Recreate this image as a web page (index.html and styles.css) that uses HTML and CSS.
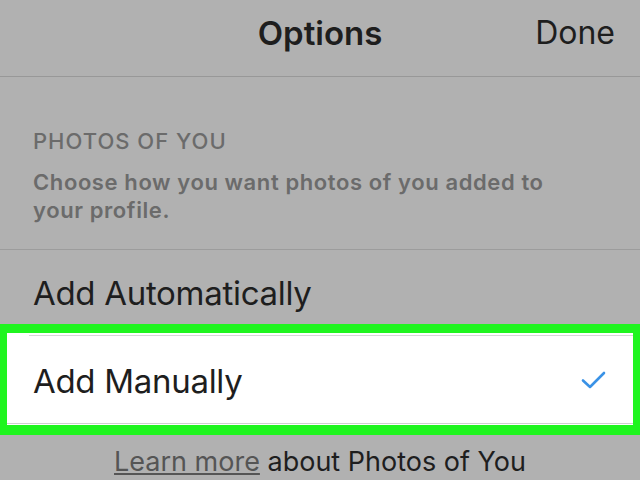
FILE: index.html
```html
<!DOCTYPE html>
<html lang="en">
<head>
  <meta charset="UTF-8">
  <meta name="viewport" content="width=device-width, initial-scale=1.0">
  <title>Options</title>
  <link rel="stylesheet" href="styles.css">
</head>
<body>
  <header class="topbar">
    <h1 class="title">Options</h1>
    <span class="done">Done</span>
  </header>

  <section class="intro">
    <h2 class="section-title">PHOTOS OF YOU</h2>
    <p class="section-desc">Choose how you want photos of you added to your profile.</p>
  </section>

  <div class="row">Add Automatically</div>

  <div class="highlight">
    <div class="row row-selected">
      <span>Add Manually</span>
      <svg class="check" width="26" height="20" viewBox="0 0 26 20">
        <path d="M2 10.5 L9 17 L23 3" fill="none" stroke="#3a92e6" stroke-width="2.6" stroke-linecap="round" stroke-linejoin="round"/>
      </svg>
    </div>
  </div>

  <p class="footer"><a href="#">Learn more</a> about Photos of You</p>
</body>
</html>
```

FILE: styles.css
```css
body {
  margin: 0;
  padding: 0;
  font-family: Inter, 'Noto Sans', sans-serif;
  background: #b1b1b1;
  color: #222;
  overflow: hidden;
}

.topbar {
  height: 76px;
  border-bottom: 1px solid #989898;
  display: flex;
  justify-content: center;
  position: relative;
}

.title {
  margin: 13px 0 0;
  font-size: 33px;
  font-weight: 600;
  color: #1e1e1e;
}

.done {
  position: absolute;
  right: 25px;
  top: 13px;
  font-size: 32px;
  color: #1e1e1e;
}

.intro {
  padding: 51px 33px 25px;
  border-bottom: 1px solid #9c9c9c;
  color: #6b6b6b;
}

.section-title {
  margin: 0 0 14px;
  font-size: 22px;
  font-weight: 500;
  letter-spacing: 1px;
}

.section-desc {
  margin: 0;
  font-size: 22px;
  font-weight: 600;
  line-height: 28px;
  letter-spacing: 0.6px;
  max-width: 550px;
}

.row {
  height: 74px;
  box-sizing: border-box;
  padding: 12px 33px 0;
  display: flex;
  align-items: center;
  font-size: 33px;
  letter-spacing: -0.3px;
  color: #1e1e1e;
}

.highlight {
  border: solid #1ff51f;
  border-width: 9px 7px 10px;
  background: #fff;
  position: relative;
}

.highlight::before {
  content: "";
  position: absolute;
  left: 22px;
  right: 0;
  top: 2px;
  border-top: 1px solid #d6d6d6;
}

.row-selected {
  height: 91px;
  padding: 6px 26px 0;
  justify-content: space-between;
  border-bottom: 1px solid #cfcfcf;
  margin-bottom: 1px;
}

.check {
  margin-top: -2px;
}

.footer {
  margin: 12px 0 0;
  text-align: center;
  font-size: 27px;
  line-height: 30px;
  color: #1e1e1e;
}

.footer a {
  color: #555;
  text-decoration: underline;
  text-underline-offset: 2px;
}
```
